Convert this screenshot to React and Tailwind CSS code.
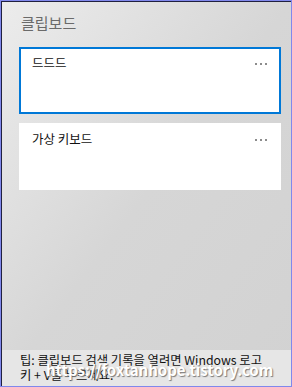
import React from 'react';

const clips = [
  { id: 1, text: '드드드', selected: true },
  { id: 2, text: '가상 키보드', selected: false },
];

const MoreDots = () => (
  <div className="flex gap-[3px] mt-[9px] h-[2px]">
    <span className="w-[2px] h-[2px] bg-[#8c8c8c]" />
    <span className="w-[2px] h-[2px] bg-[#8c8c8c]" />
    <span className="w-[2px] h-[2px] bg-[#8c8c8c]" />
  </div>
);

const App = () => {
  return (
    <div
      className="w-[292px] h-[387px] border border-[#8088ec] bg-[#202040] overflow-hidden"
      style={{ fontFamily: '"Noto Sans CJK KR", "Noto Sans", sans-serif' }}
    >
      <div className="relative ml-px mt-px h-[384px] w-[289px] flex flex-col bg-gradient-to-br from-[#ececec] via-[#d6d6d6] to-[#d2d2d2]">
        {/* header */}
        <div className="pl-[19px] pt-[10px] h-[45px] text-[15px] leading-[22px] text-[#6a6a6a]">클립보드</div>

        {/* clip list */}
        <div className="flex flex-col gap-[9px] pl-[17px] pr-[10px]">
          {clips.map(c => (
            <div
              key={c.id}
              className={`h-[67px] bg-white flex justify-between ${c.selected ? 'border-2 border-[#0078d7] pl-[11px] pr-[12px] pt-[5px]' : 'pl-[13px] pr-[14px] pt-[7px]'}`}
            >
              <span className="text-[12.5px] leading-[18px] text-[#111]">{c.text}</span>
              <MoreDots />
            </div>
          ))}
        </div>

        <div className="flex-1" />

        {/* footer tip */}
        <div className="h-[36px] bg-[#e6e6e6] pl-[18px] pr-[4px] pt-[3px] text-[12.3px] leading-[15px] text-[#111] whitespace-nowrap">
          팁: 클립보드 검색 기록을 열려면 Windows 로고<br />키 + V를 누르세요.
        </div>

        {/* watermark */}
        <div className="absolute left-[44px] top-[360px] text-[15px] font-bold leading-[16px] text-white [text-shadow:1px_1px_1px_#7a7a7a]">
          https://foxtanhope.tistory.com
        </div>
      </div>
    </div>
  );
};

export default App;
